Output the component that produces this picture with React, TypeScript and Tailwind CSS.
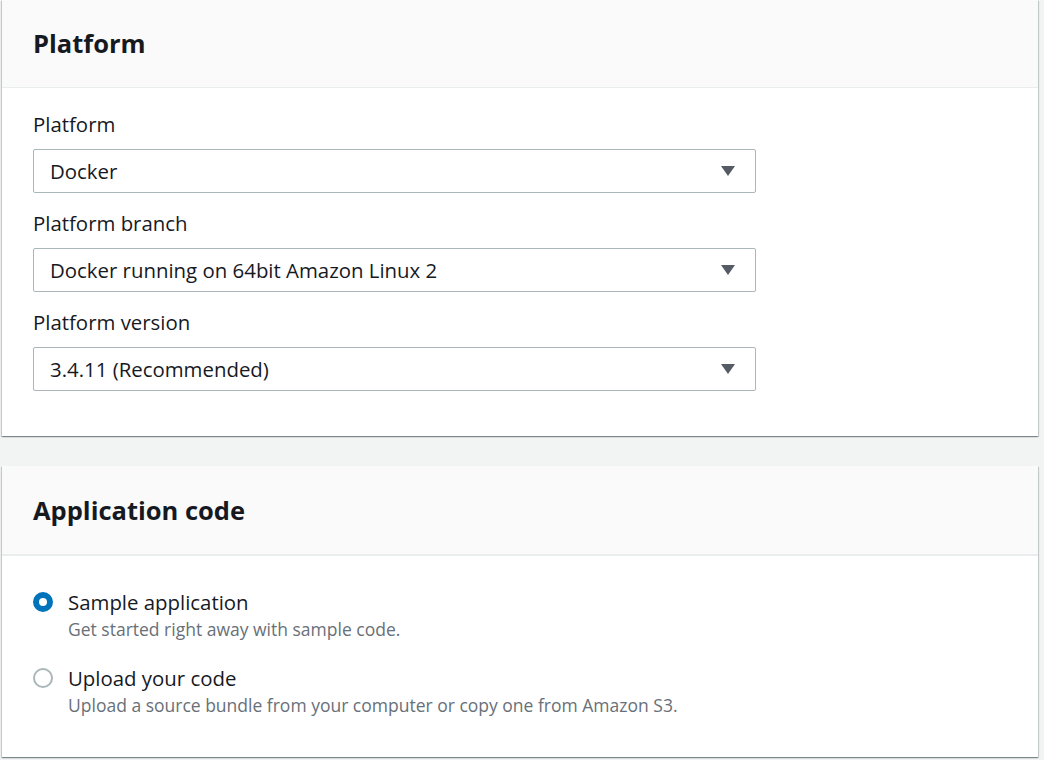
import { useState } from "react";

const FONT = { fontFamily: '"Open Sans", "Liberation Sans", Arial, sans-serif' };

const cardShadow =
  "shadow-[0_1px_1px_0_rgba(0,28,36,0.3),1px_1px_1px_0_rgba(0,28,36,0.15),-1px_1px_1px_0_rgba(0,28,36,0.15)]";

function Caret() {
  return (
    <svg width="14" height="10" viewBox="0 0 14 10" className="shrink-0">
      <path d="M0 0 H14 L7 10 Z" fill="#545b64" />
    </svg>
  );
}

function SelectField({ label, value }: { label: string; value: string }) {
  return (
    <div className="flex flex-col">
      <span className="h-[24px] text-[20.4px] leading-[24px] text-[#16191f]">{label}</span>
      <div className="mt-[13px] h-[44px] w-[723px] flex items-center justify-between pl-[16px] pr-[20px] border border-[#aab7b8] rounded-[2px] bg-white">
        <span className="text-[20.4px] text-[#16191f]">{value}</span>
        <Caret />
      </div>
    </div>
  );
}

function Radio({ checked }: { checked: boolean }) {
  return checked ? (
    <span className="w-[20px] h-[20px] rounded-full border-[6px] border-[#0073bb] bg-white shrink-0" />
  ) : (
    <span className="w-[20px] h-[20px] rounded-full border-2 border-[#aab7b8] bg-white shrink-0" />
  );
}

export default function App() {
  const [source, setSource] = useState<"sample" | "upload">("sample");

  const options = [
    {
      id: "sample" as const,
      title: "Sample application",
      desc: "Get started right away with sample code.",
    },
    {
      id: "upload" as const,
      title: "Upload your code",
      desc: "Upload a source bundle from your computer or copy one from Amazon S3.",
    },
  ];

  return (
    <div className="h-[760px] overflow-hidden bg-[#f2f3f3]" style={FONT}>
      {/* Platform */}
      <div className={`ml-[2px] w-[1036px] bg-white ${cardShadow}`}>
        <div className="h-[88px] flex items-center px-[31px] bg-[#fafafa] border-b border-[#eaeded]">
          <h2 className="text-[25.5px] font-bold text-[#16191f]">Platform</h2>
        </div>
        <div className="px-[31px] pt-[24px] pb-[45px] flex flex-col gap-[18px]">
          <SelectField label="Platform" value="Docker" />
          <SelectField label="Platform branch" value="Docker running on 64bit Amazon Linux 2" />
          <SelectField label="Platform version" value="3.4.11 (Recommended)" />
        </div>
      </div>

      {/* Application code */}
      <div className={`mt-[30px] ml-[2px] w-[1036px] bg-white ${cardShadow}`}>
        <div className="h-[90px] flex items-center px-[31px] bg-[#fafafa] border-b-2 border-[#eaeded]">
          <h2 className="text-[25.5px] font-bold text-[#16191f]">Application code</h2>
        </div>
        <div className="px-[31px] pt-[34px] pb-[41px] flex flex-col gap-[26px]">
          {options.map((o) => (
            <div
              key={o.id}
              className="flex items-start gap-[15px] cursor-pointer"
              onClick={() => setSource(o.id)}
            >
              <div className="h-[24px] flex items-center">
                <Radio checked={source === o.id} />
              </div>
              <div className="flex flex-col">
                <span className="text-[20.4px] leading-[24px] text-[#16191f]">{o.title}</span>
                <span className="mt-[4px] text-[17.5px] leading-[22px] text-[#687078]">{o.desc}</span>
              </div>
            </div>
          ))}
        </div>
      </div>
    </div>
  );
}
